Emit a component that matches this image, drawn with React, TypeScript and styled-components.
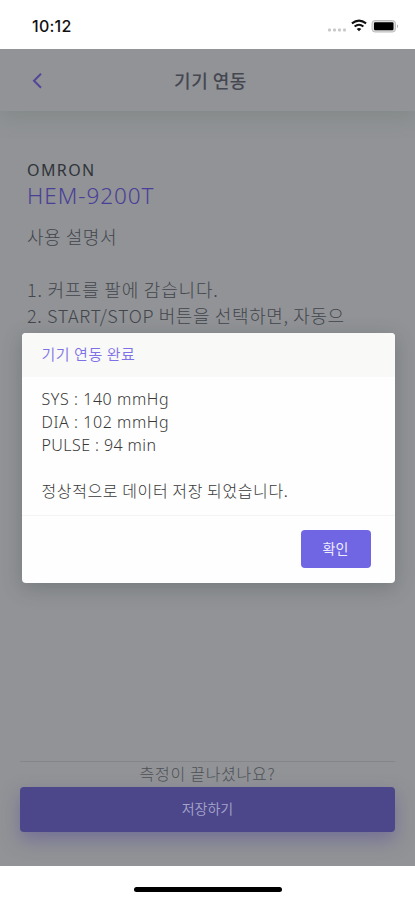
import React from 'react';
import styled, { createGlobalStyle } from 'styled-components';

const Global = createGlobalStyle`
  * { box-sizing: border-box; }
  body { margin: 0; background: #fff; font-family: "Noto Sans CJK KR", sans-serif; }
  button { font-family: inherit; border: 0; padding: 0; }
`;

const Screen = styled.div`
  position: relative;
  display: flex;
  flex-direction: column;
  width: 415px;
  height: 900px;
  overflow: hidden;
  background: #fff;
`;

const StatusBar = styled.header`
  flex: none;
  height: 49px;
  padding: 2px 16px 0 32px;
  display: flex;
  align-items: center;
  justify-content: space-between;
`;

const Clock = styled.span`
  font: 500 16px/20px Inter, sans-serif;
  letter-spacing: 0.25px;
  color: #111;
`;

const StatusIcons = styled.svg`
  display: block;
  width: 72px;
  height: 16px;
`;

const Page = styled.main`
  flex: none;
  height: 817px;
  display: flex;
  flex-direction: column;
  overflow: hidden;
  background: #919396;
`;

const NavBar = styled.nav`
  flex: none;
  height: 62px;
  display: grid;
  grid-template-columns: 74px 1fr 68px;
  align-items: center;
  background: #919397;
  box-shadow: 0 6px 18px rgba(112, 124, 120, 0.45);
`;

const BackButton = styled.button`
  background: none;
  display: flex;
  padding-left: 32px;
`;

const NavTitle = styled.h1`
  margin: 0;
  text-align: center;
  font-size: 18px;
  font-weight: 500;
  line-height: 26px;
  letter-spacing: 0.5px;
  color: #454751;
`;

const Guide = styled.section`
  flex: 1;
  padding: 47px 27px 0;
  color: #42464d;
`;

const Brand = styled.div`
  font-family: "Noto Sans", "Noto Sans CJK KR", sans-serif;
  font-size: 16px;
  line-height: 24px;
  letter-spacing: 1.4px;
  color: #30343a;
`;

const Model = styled.h2`
  margin: 0;
  font-family: "Noto Sans", "Noto Sans CJK KR", sans-serif;
  font-size: 22.5px;
  font-weight: 300;
  line-height: 28px;
  letter-spacing: 0.95px;
  color: #493f98;
`;

const GuideLine = styled.p<{ $gap?: number; $track?: number }>`
  margin: ${p => p.$gap ?? 0}px 0 0;
  font-size: 18px;
  font-weight: 300;
  line-height: 26px;
  letter-spacing: ${p => p.$track ?? 0}px;
  white-space: nowrap;
`;

const Footer = styled.footer`
  flex: none;
  height: 105px;
  margin: 0 20px;
  border-top: 1px solid #83868a;
`;

const Question = styled.p`
  margin: 0;
  text-align: center;
  font-size: 16px;
  font-weight: 300;
  line-height: 23px;
  padding-bottom: 2px;
  letter-spacing: 0.75px;
  color: #4d5157;
`;

const SaveButton = styled.button`
  display: block;
  width: 100%;
  height: 45px;
  padding-bottom: 3px;
  border-radius: 4px;
  background: #4c478b;
  color: #a7a4ca;
  font-size: 14px;
  font-weight: 350;
  box-shadow: 0 8px 18px rgba(86, 78, 150, 0.5);
`;

const HomeArea = styled.div`
  flex: 1;
  display: flex;
  justify-content: center;
  align-items: center;
  padding-top: 13px;
`;

const HomeIndicator = styled.div`
  width: 148px;
  height: 5px;
  border-radius: 3px;
  background: #000;
`;

const Backdrop = styled.div`
  position: absolute;
  inset: 49px 0 34px;
  padding-left: 1px;
  display: flex;
  justify-content: center;
  align-items: center;
`;

const Dialog = styled.div`
  width: 373px;
  height: 250px;
  display: flex;
  flex-direction: column;
  border-radius: 4px;
  overflow: hidden;
  background: #fefefe;
  box-shadow: 0 5px 20px rgba(55, 62, 66, 0.3);
`;

const DialogHeader = styled.div`
  flex: none;
  height: 44px;
  padding: 8px 20px 0;
  background: #f9f9f8;
  color: #7e70e6;
  font-size: 15px;
  font-weight: 350;
  line-height: 25px;
  letter-spacing: 0.55px;
`;

const DialogBody = styled.div`
  flex: 1;
  padding: 11px 20px 0;
`;

const Reading = styled.p<{ $track?: number }>`
  margin: 0;
  font-size: 16px;
  font-weight: 300;
  line-height: 23px;
  letter-spacing: ${p => p.$track ?? 0}px;
  color: #383838;
  white-space: nowrap;
`;

const Measurement = styled(Reading)`
  font-family: "Noto Sans", "Noto Sans CJK KR", sans-serif;
`;

const ResultMessage = styled(Reading)`
  margin-top: 22px;
`;

const DialogActions = styled.div`
  flex: none;
  height: 68px;
  padding: 14px 24px 0;
  display: flex;
  justify-content: flex-end;
  align-items: flex-start;
  border-top: 1px solid #f4f4f5;
`;

const ConfirmButton = styled.button`
  width: 70px;
  height: 38px;
  padding-bottom: 2px;
  border-radius: 4px;
  background: #7065e3;
  color: #eeecff;
  font-size: 14px;
  font-weight: 400;
`;

export default function App() {
  return (
    <Screen>
      <Global />
      <StatusBar>
        <Clock>10:12</Clock>
        <StatusIcons viewBox="0 0 72 16">
          <g fill="#c8c8c8">
            <rect x="1" y="10.5" width="3" height="3" rx="1" />
            <rect x="6" y="10.5" width="3" height="3" rx="1" />
            <rect x="11" y="10.5" width="3" height="3" rx="1" />
            <rect x="16" y="10.5" width="3" height="3" rx="1" />
          </g>
          <g fill="none" stroke="#111" strokeWidth="2">
            <path d="M24.9 5.4Q32 -.1 39.1 5.4" />
            <path d="M27.6 8.6Q32 5 36.4 8.6" />
          </g>
          <path d="M29.7 10.9Q32 9.2 34.3 10.9L32 13.2Z" fill="#111" />
          <rect x="45" y="2.5" width="23.5" height="11.5" rx="3" fill="#ddd" stroke="#bdbdbd" />
          <rect x="47" y="4.3" width="19.5" height="8" rx="1.2" fill="#000" />
          <path d="M70 6.2q2 2 0 4z" fill="#aaa" />
        </StatusIcons>
      </StatusBar>
      <Page>
        <NavBar>
          <BackButton aria-label="뒤로">
            <svg width="11" height="17" viewBox="0 0 11 17" fill="none" stroke="#514799" strokeWidth="2">
              <path d="M9 1.8L2 8.8L9 15.8" />
            </svg>
          </BackButton>
          <NavTitle>기기 연동</NavTitle>
        </NavBar>
        <Guide>
          <Brand>OMRON</Brand>
          <Model>HEM-9200T</Model>
          <GuideLine $gap={13} $track={0.55}>사용 설명서</GuideLine>
          <GuideLine $gap={27} $track={0.8}>1. 커프를 팔에 감습니다.</GuideLine>
          <GuideLine $track={0.62}>2. START/STOP 버튼을 선택하면, 자동으</GuideLine>
        </Guide>
        <Footer>
          <Question>측정이 끝나셨나요?</Question>
          <SaveButton>저장하기</SaveButton>
        </Footer>
      </Page>
      <HomeArea>
        <HomeIndicator />
      </HomeArea>
      <Backdrop>
        <Dialog role="dialog">
          <DialogHeader>기기 연동 완료</DialogHeader>
          <DialogBody>
            <Measurement $track={0.57}>SYS : 140 mmHg</Measurement>
            <Measurement $track={0.57}>DIA : 102 mmHg</Measurement>
            <Measurement $track={0.42}>PULSE : 94 min</Measurement>
            <ResultMessage $track={0.6}>정상적으로 데이터 저장 되었습니다.</ResultMessage>
          </DialogBody>
          <DialogActions>
            <ConfirmButton>확인</ConfirmButton>
          </DialogActions>
        </Dialog>
      </Backdrop>
    </Screen>
  );
}
